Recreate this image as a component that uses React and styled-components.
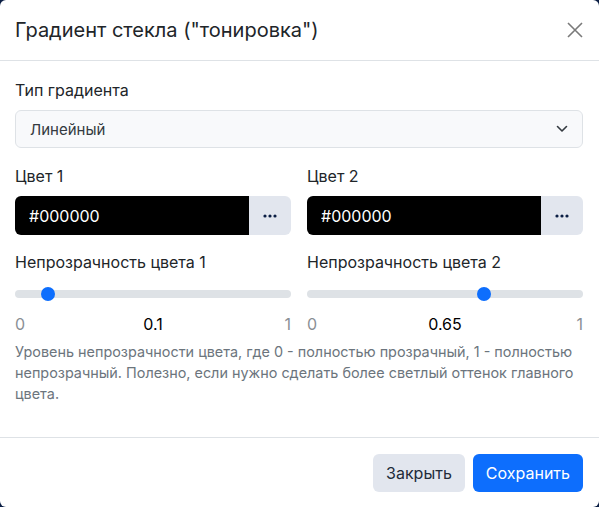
import React, { useState } from 'react';
import styled, { createGlobalStyle } from 'styled-components';

const GlobalStyle = createGlobalStyle`
    html, body {
        margin: 0;
        padding: 0;
        background: #0b1e44;
    }
    body {
        font-family: Inter, "Noto Sans", sans-serif;
        color: #212529;
    }
`;

const ColorField = ({ label, value }) => (
    <Field>
        <Label>{label}</Label>
        <ColorGroup>
            <ColorInput value={value} readOnly />
            <DotsButton type="button">
                <svg width="14" height="4" viewBox="0 0 14 4">
                    <circle cx="2" cy="2" r="1.6" fill="#0b1e44" />
                    <circle cx="7" cy="2" r="1.6" fill="#0b1e44" />
                    <circle cx="12" cy="2" r="1.6" fill="#0b1e44" />
                </svg>
            </DotsButton>
        </ColorGroup>
    </Field>
);

const OpacityField = ({ label, initial }) => {
    const [value, setValue] = useState(initial);
    return (
        <Field>
            <Label>{label}</Label>
            <Range
                type="range"
                min="0"
                max="1"
                step="0.05"
                value={value}
                onChange={e => setValue(parseFloat(e.target.value))}
            />
            <RangeScale>
                <ScaleEnd>0</ScaleEnd>
                <ScaleValue>{value}</ScaleValue>
                <ScaleEnd>1</ScaleEnd>
            </RangeScale>
        </Field>
    );
};

const App = () => {
    return (
        <>
            <GlobalStyle />
            <Modal>
                <Header>
                    <Title>Градиент стекла ("тонировка")</Title>
                    <CloseButton type="button" aria-label="Закрыть">
                        <svg width="18" height="18" viewBox="0 0 18 18">
                            <path d="M2 2L16 16M16 2L2 16" stroke="#7a7a7a" strokeWidth="1.6" />
                        </svg>
                    </CloseButton>
                </Header>
                <Body>
                    <Field>
                        <Label>Тип градиента</Label>
                        <SelectBox>
                            <span>Линейный</span>
                            <svg width="12" height="8" viewBox="0 0 12 8">
                                <path d="M1.5 1.5L6 6l4.5-4.5" fill="none" stroke="#343a40" strokeWidth="1.6" strokeLinecap="round" strokeLinejoin="round" />
                            </svg>
                        </SelectBox>
                    </Field>
                    <Grid>
                        <ColorField label="Цвет 1" value="#000000" />
                        <ColorField label="Цвет 2" value="#000000" />
                        <OpacityField label="Непрозрачность цвета 1" initial={0.1} />
                        <OpacityField label="Непрозрачность цвета 2" initial={0.65} />
                    </Grid>
                    <Help>
                        Уровень непрозрачности цвета, где 0 - полностью прозрачный, 1 - полностью непрозрачный. Полезно, если нужно сделать более светлый оттенок главного цвета.
                    </Help>
                </Body>
                <Footer>
                    <Button $variant="secondary">Закрыть</Button>
                    <Button $variant="primary">Сохранить</Button>
                </Footer>
            </Modal>
        </>
    );
};

const Modal = styled.div`
    width: 599px;
    height: 507px;
    box-sizing: border-box;
    background: #fff;
    border-radius: 6px;
    display: flex;
    flex-direction: column;
    overflow: hidden;
`;

const Header = styled.div`
    display: flex;
    align-items: center;
    justify-content: space-between;
    height: 61px;
    padding: 0 15px;
    border-bottom: 1px solid #dee2e6;
    box-sizing: border-box;
`;

const Title = styled.h1`
    margin: 0;
    font-size: 20px;
    font-weight: 400;
    line-height: 24px;
    color: #212529;
`;

const CloseButton = styled.button`
    border: none;
    background: none;
    padding: 0;
    display: flex;
    cursor: pointer;
`;

const Body = styled.div`
    padding: 18px 16px 0 15px;
    flex: 1;
`;

const Field = styled.div`
    display: flex;
    flex-direction: column;
    min-width: 0;
`;

const Label = styled.label`
    font-size: 16px;
    font-weight: 400;
    line-height: 22px;
    margin-bottom: 9px;
`;

const SelectBox = styled.div`
    height: 38px;
    box-sizing: border-box;
    border: 1px solid #dee2e6;
    border-radius: 6px;
    background: #f8f9fb;
    display: flex;
    align-items: center;
    justify-content: space-between;
    padding: 0 14px;
    font-size: 15px;
    color: #343a40;
`;

const Grid = styled.div`
    display: grid;
    grid-template-columns: minmax(0, 1fr) minmax(0, 1fr);
    column-gap: 16px;
    row-gap: 16px;
    margin-top: 17px;
`;

const ColorGroup = styled.div`
    display: flex;
    height: 39px;
    border-radius: 6px;
    overflow: hidden;
`;

const ColorInput = styled.input`
    flex: 1;
    min-width: 0;
    width: 0;
    border: none;
    background: #000;
    color: #fff;
    font-family: inherit;
    font-size: 16px;
    padding: 0 14px;
    outline: none;
`;

const DotsButton = styled.button`
    flex: 0 0 42px;
    border: none;
    background: #e2e6ee;
    display: flex;
    align-items: center;
    justify-content: center;
    padding: 0;
`;

const Range = styled.input`
    -webkit-appearance: none;
    appearance: none;
    width: 100%;
    height: 14px;
    margin: 5px 0 0;
    background: transparent;

    &::-webkit-slider-runnable-track {
        height: 8px;
        background: #dee2e6;
        border-radius: 4px;
    }
    &::-webkit-slider-thumb {
        -webkit-appearance: none;
        width: 14px;
        height: 14px;
        margin-top: -3px;
        border-radius: 50%;
        background: #0d6efd;
        border: none;
    }
    &::-moz-range-track {
        height: 8px;
        background: #dee2e6;
        border-radius: 4px;
    }
    &::-moz-range-thumb {
        width: 14px;
        height: 14px;
        border-radius: 50%;
        background: #0d6efd;
        border: none;
    }
`;

const RangeScale = styled.div`
    display: flex;
    justify-content: space-between;
    align-items: center;
    margin-top: 12px;
    font-size: 16px;
    line-height: 22px;
`;

const ScaleEnd = styled.span`
    color: #8a8f95;
    width: 12px;
    &:last-child {
        text-align: right;
    }
`;

const ScaleValue = styled.span`
    color: #000;
`;

const Help = styled.p`
    margin: 6px 0 0;
    font-size: 14.4px;
    line-height: 21px;
    color: #6c757d;
`;

const Footer = styled.div`
    display: flex;
    justify-content: flex-end;
    gap: 8px;
    padding: 16px 16px 15px;
    border-top: 1px solid #dee2e6;
`;

const Button = styled.button`
    height: 38px;
    padding: 0 13px;
    border: none;
    border-radius: 6px;
    font-family: inherit;
    font-size: 16px;
    cursor: pointer;
    background: ${p => (p.$variant === 'primary' ? '#0d6efd' : '#e2e6ee')};
    color: ${p => (p.$variant === 'primary' ? '#fff' : '#212b3a')};
`;

export default App;
